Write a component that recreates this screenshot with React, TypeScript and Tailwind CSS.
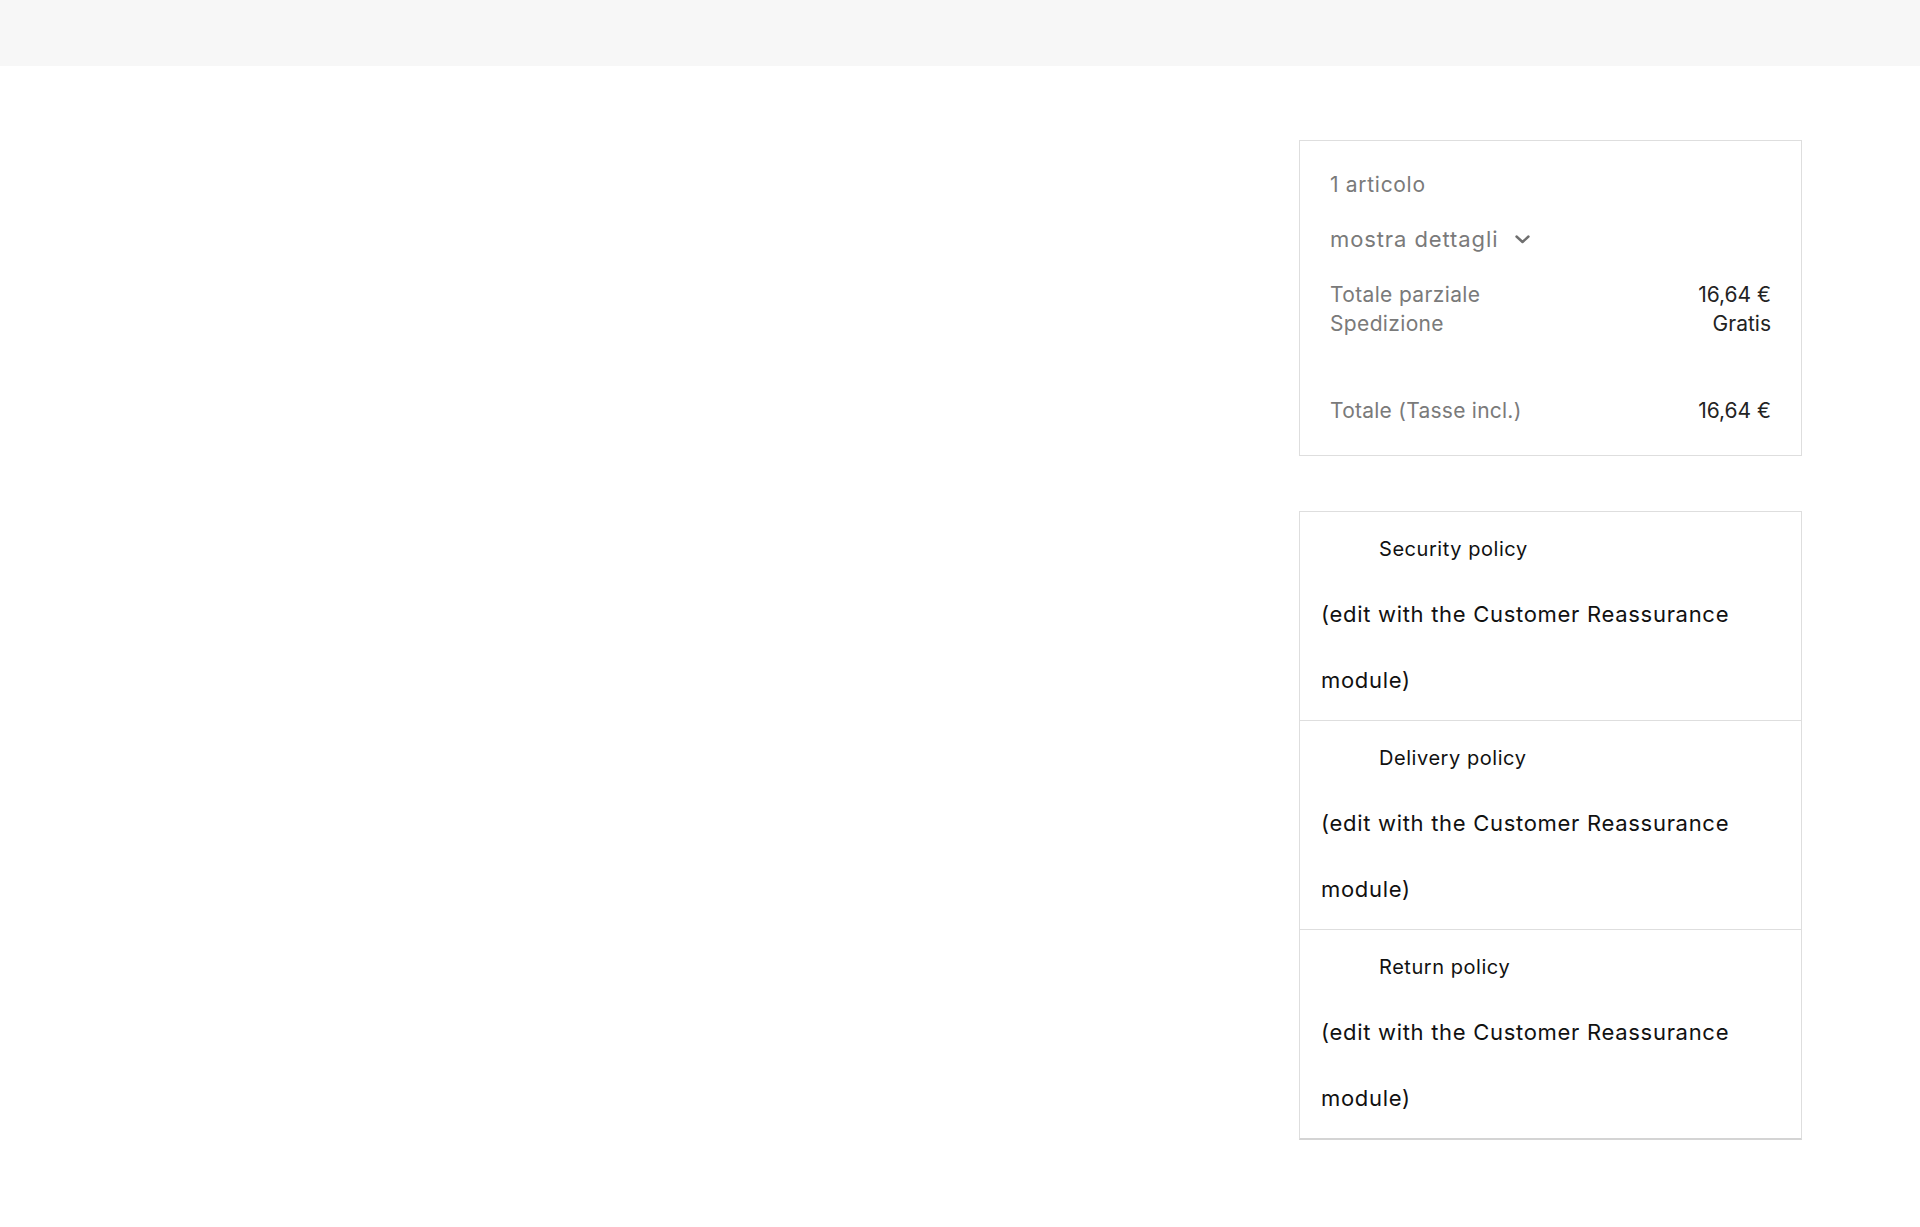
const policies = ["Security policy", "Delivery policy", "Return policy"];

function ChevronDown() {
  return (
    <svg className="ml-[16px] h-[12px] w-[17px] text-[#6f6f6f]" viewBox="0 0 17 12" fill="none" stroke="currentColor" strokeWidth="2.4" strokeLinecap="round" strokeLinejoin="round">
      <path d="M2.5 3.5l6 5.5 6-5.5" />
    </svg>
  );
}

export default function App() {
  return (
    <div className="min-h-[1227px] bg-white font-['Inter',sans-serif]">
      {/* top bar */}
      <div className="h-[66px] bg-[#f7f7f7]" />

      <div className="flex justify-end pr-[118px] pt-[74px]">
        <div className="flex w-[503px] flex-col gap-[55px]">
          {/* cart summary */}
          <div className="border border-[#dedede] px-[30px] pt-[30px] pb-[30px]">
            <div className="text-[21px] leading-[28px] tracking-[0.7px] text-[#7a7a7a]">1 articolo</div>
            <div className="mt-[26px] flex items-center text-[22px] leading-[28px] tracking-[0.9px] text-[#7a7a7a]">
              mostra dettagli
              <ChevronDown />
            </div>
            <div className="mt-[27px] text-[21px] leading-[29px]">
              <div className="flex justify-between">
                <span className="tracking-[0.35px] text-[#7a7a7a]">Totale parziale</span>
                <span className="text-[#232323]">16,64 €</span>
              </div>
              <div className="flex justify-between">
                <span className="tracking-[0.35px] text-[#7a7a7a]">Spedizione</span>
                <span className="text-[#232323]">Gratis</span>
              </div>
            </div>
            <div className="mt-[59px] flex justify-between text-[21px] leading-[28px]">
              <span className="tracking-[0.25px] text-[#7a7a7a]">Totale (Tasse incl.)</span>
              <span className="text-[#232323]">16,64 €</span>
            </div>
          </div>

          {/* reassurance */}
          <div className="border border-b-2 border-[#dedede] border-b-[#d4d4d4]">
            {policies.map((title) => (
              <div key={title} className="border-b border-[#dedede] pl-[21px] pt-[23px] pb-[7px] text-[#111] last:border-b-0">
                <div className="pl-[58px] text-[20px] leading-[28px] tracking-[0.55px]">{title}</div>
                <p className="mt-[18px] w-[450px] text-[22px] leading-[66px] tracking-[0.7px]">
                  (edit with the Customer Reassurance module)
                </p>
              </div>
            ))}
          </div>
        </div>
      </div>
    </div>
  );
}
